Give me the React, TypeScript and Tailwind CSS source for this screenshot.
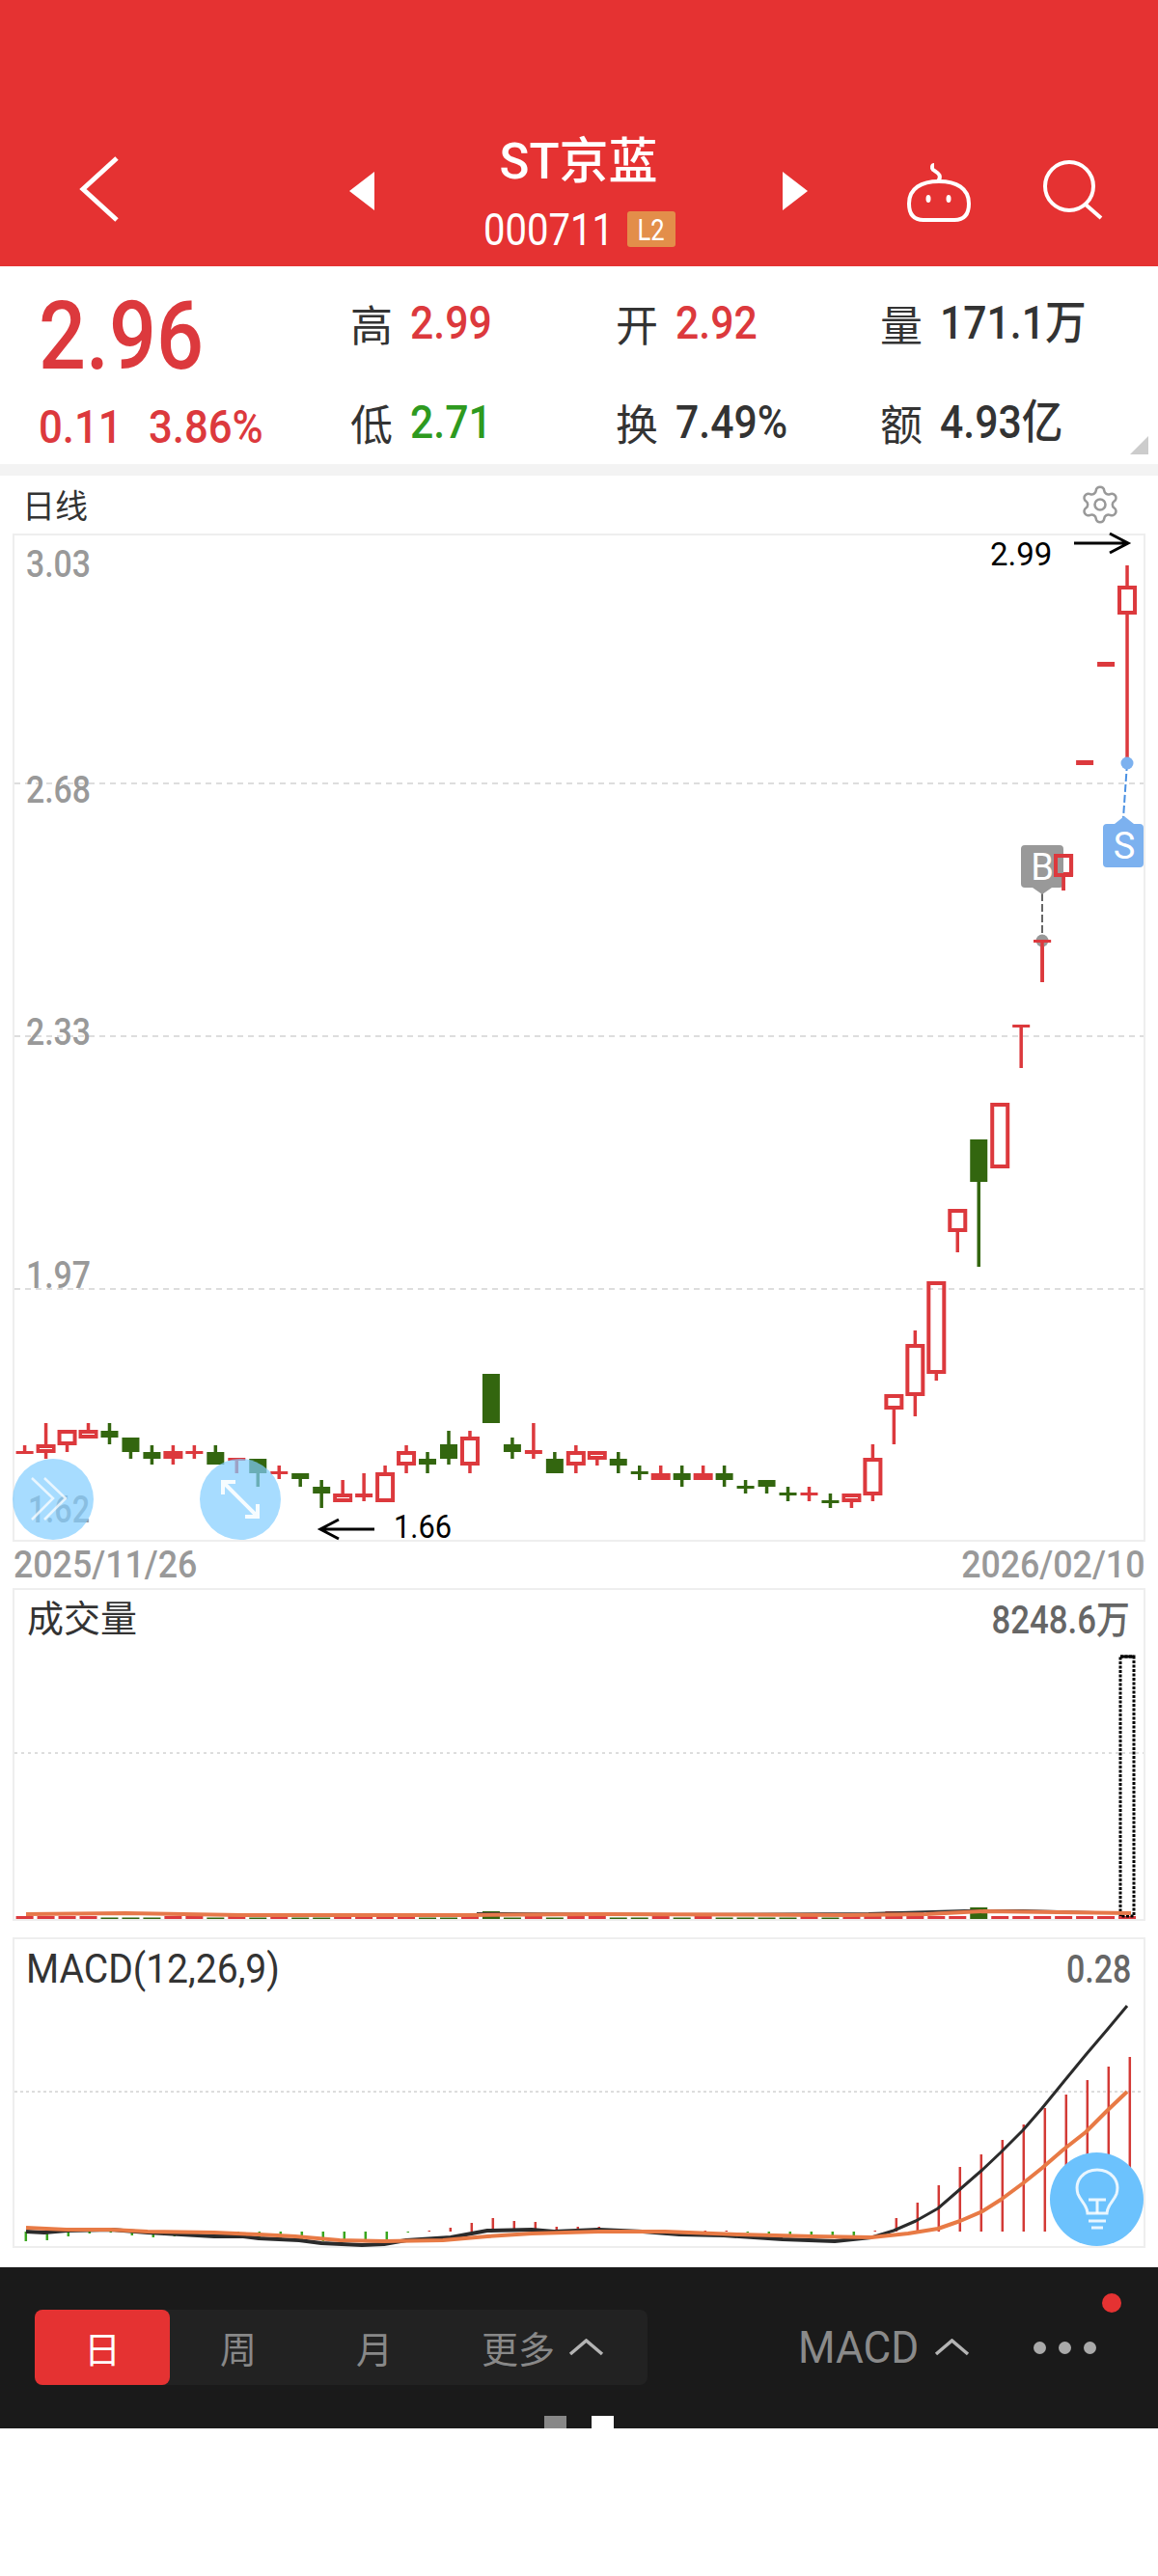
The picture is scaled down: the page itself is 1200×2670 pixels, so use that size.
import { Settings } from "lucide-react";

const numFont = "font-['Roboto','Noto_Sans_CJK_SC',sans-serif]";

// high, body top, body bottom, low, colour — page pixel coordinates
const candles: [number, number, number, number, "r" | "g"][] = [
  [1498, 1504, 1507, 1507, "r"],
  [1475, 1497, 1506, 1512, "r"],
  [1482, 1482, 1498, 1505, "r"],
  [1475, 1482, 1491, 1491, "r"],
  [1475, 1483, 1490, 1497, "g"],
  [1490, 1490, 1505, 1512, "g"],
  [1498, 1505, 1512, 1518, "g"],
  [1498, 1504, 1512, 1518, "r"],
  [1498, 1504, 1507, 1512, "r"],
  [1498, 1505, 1518, 1518, "g"],
  [1511, 1511, 1514, 1527, "r"],
  [1512, 1512, 1527, 1541, "g"],
  [1519, 1525, 1528, 1533, "r"],
  [1527, 1527, 1533, 1541, "g"],
  [1534, 1541, 1548, 1563, "g"],
  [1534, 1548, 1557, 1557, "r"],
  [1527, 1548, 1552, 1556, "r"],
  [1519, 1526, 1557, 1557, "r"],
  [1498, 1504, 1519, 1527, "r"],
  [1505, 1512, 1518, 1527, "g"],
  [1483, 1497, 1512, 1518, "g"],
  [1483, 1489, 1519, 1527, "r"],
  [1424, 1424, 1475, 1475, "g"],
  [1490, 1497, 1505, 1512, "g"],
  [1475, 1503, 1507, 1512, "r"],
  [1505, 1512, 1527, 1527, "g"],
  [1498, 1504, 1519, 1527, "r"],
  [1504, 1504, 1513, 1519, "r"],
  [1505, 1512, 1519, 1527, "g"],
  [1519, 1525, 1528, 1534, "g"],
  [1519, 1527, 1534, 1534, "r"],
  [1519, 1527, 1534, 1541, "g"],
  [1519, 1527, 1534, 1534, "r"],
  [1519, 1527, 1534, 1541, "g"],
  [1534, 1540, 1543, 1548, "g"],
  [1534, 1534, 1541, 1548, "g"],
  [1541, 1547, 1550, 1556, "g"],
  [1541, 1547, 1550, 1556, "r"],
  [1548, 1555, 1558, 1563, "g"],
  [1548, 1548, 1557, 1563, "r"],
  [1497, 1511, 1550, 1556, "r"],
  [1445, 1445, 1461, 1497, "r"],
  [1379, 1393, 1447, 1468, "r"],
  [1328, 1328, 1424, 1431, "r"],
  [1253, 1253, 1277, 1298, "r"],
  [1181, 1181, 1225, 1313, "g"],
  [1143, 1143, 1211, 1211, "r"],
  [1062, 1062, 1065, 1107, "r"],
  [974, 974, 977, 1018, "r"],
  [885, 885, 908, 923, "r"],
  [788, 788, 793, 793, "r"],
  [686, 686, 691, 691, "r"],
  [586, 607, 637, 791, "r"],
];

const RED = "#dc393d";
const GREEN = "#33660f";
const cx = (i: number) => 25.6 + 21.97 * i;

// MACD histogram tips, one per candle. baseline is y=2313
const macdBars = [
  2323, 2322, 2318, 2315, 2314, 2317, 2319, 2318, 2318, 2318, 2319, 2320, 2322, 2322, 2323, 2324, 2324, 2322, 2314,
  2312, 2309, 2304, 2299, 2302, 2303, 2308, 2308, 2308, 2312, 2312, 2312, 2312, 2312, 2312, 2314, 2315, 2317, 2317,
  2318, 2318, 2312, 2299, 2283, 2265, 2246, 2233, 2218, 2202, 2185, 2171, 2156, 2142, 2132,
];

const macdBlackLeft =
  "27,2313 46,2314 69,2312 115,2311 153,2314 222,2318 252,2318 268,2320 310,2322 333,2325 375,2327 398,2326 421,2322 467,2319 505,2312 551,2311 574,2313 620,2311 666,2313 704,2316 750,2317 811,2321 865,2323 903,2319";
const macdBlackRight =
  "903,2319 926,2312 949,2302 972,2289 995,2269 1018,2249 1037,2231 1060,2208 1080,2185 1102,2158 1125,2130 1148,2103 1168,2079";
const macdOrange =
  "27,2309 69,2311 115,2311 153,2313 222,2314 268,2316 306,2318 352,2322 398,2323 459,2322 505,2318 551,2315 620,2313 689,2313 765,2316 842,2318 903,2319 941,2315 972,2310 995,2302 1018,2292 1037,2280 1060,2263 1080,2247 1102,2228 1125,2210 1148,2187 1168,2168";

function Stat({ label, value, color }: { label: string; value: string; color: string }) {
  return (
    <div className="flex items-center h-[60px]">
      <span className="text-[44px] leading-none text-[#333333] w-[62px]">{label}</span>
      <span className={`${numFont} inline-block origin-left scale-x-[0.89] whitespace-nowrap text-[48px] leading-none font-medium ${color}`}>
        {value}
      </span>
    </div>
  );
}

function Caret() {
  return (
    <svg width="37" height="18" viewBox="0 0 37 18" fill="none" stroke="#b4b4b4" strokeWidth="3.5">
      <polyline points="2,16 18.5,2 35,16" />
    </svg>
  );
}

function Candles() {
  return (
    <>
      {candles.map(([hi, top, bot, lo, c], i) => {
        const x = cx(i);
        const col = c === "r" ? RED : GREEN;
        const thin = bot - top < 6;
        return (
          <g key={i} stroke={col} fill="none">
            {hi < top && <line x1={x} x2={x} y1={hi} y2={top} strokeWidth={3.5} />}
            {lo > bot && <line x1={x} x2={x} y1={bot} y2={lo} strokeWidth={3.5} />}
            {c === "g" || thin ? (
              <rect x={x - 9} y={top} width={18} height={bot - top} fill={col} stroke="none" />
            ) : (
              <rect x={x - 8} y={top + 2} width={16} height={bot - top - 4} strokeWidth={4} />
            )}
          </g>
        );
      })}
    </>
  );
}

export default function App() {
  return (
    <div className="w-[1200px] h-[2670px] bg-white font-['Noto_Sans_CJK_SC',sans-serif] overflow-hidden">
      {/* header */}
      <div className="h-[276px] bg-[#e53232] flex items-start pt-[145px] pl-[82px] text-white">
        <svg width="42" height="68" viewBox="0 0 42 68" className="mt-[17px]" fill="none" stroke="white" strokeWidth="5">
          <polyline points="39,2 4,34 39,66" />
        </svg>
        <svg width="26" height="40" viewBox="0 0 26 40" className="ml-[238px] mt-[33px]">
          <polygon points="26,0 0,20 26,40" fill="white" />
        </svg>
        <div className="w-[423px] flex flex-col">
          <div className="text-[51px] leading-[46px] font-medium text-center font-['Roboto','Noto_Sans_CJK_SC',sans-serif]">ST京蓝</div>
          <div className="flex items-center mt-[28px] h-[37px] pl-[113px]">
            <span className={`${numFont} w-[149px] inline-block origin-left scale-x-[0.87] text-[46px] leading-none`}>000711</span>
            <span className={`${numFont} w-[50px] h-[37px] rounded-[3px] bg-[#e38e4a] flex items-center justify-center text-[32px] leading-none`}>
              <span className="inline-block scale-x-[0.8]">L2</span>
            </span>
          </div>
        </div>
        <svg width="26" height="40" viewBox="0 0 26 40" className="mt-[33px]">
          <polygon points="0,0 26,20 0,40" fill="white" />
        </svg>
        <svg width="68" height="62" viewBox="0 0 68 62" className="ml-[102px] mt-[24px]" fill="none" stroke="white" strokeWidth="4">
          <path d="M3 42 C3 26 16 19 34 19 C52 19 65 26 65 42 C65 53 60 59 50 59 L18 59 C8 59 3 53 3 42 Z" />
          <path d="M33 19 C38 12 32 10 28 7 C26 5 27 2 29 2" />
          <ellipse cx="23" cy="37" rx="2.5" ry="4" fill="white" stroke="none" />
          <ellipse cx="44" cy="37" rx="2.5" ry="4" fill="white" stroke="none" />
        </svg>
        <svg width="62" height="62" viewBox="0 0 62 62" className="ml-[74px] mt-[21px]" fill="none" stroke="white" strokeWidth="4">
          <circle cx="27" cy="27" r="25" />
          <line x1="44" y1="46" x2="60" y2="60" />
        </svg>
      </div>

      {/* quote stats */}
      <div className="h-[205px] flex relative">
        <div className={`${numFont} w-[363px] pl-[40px] pt-[31px] flex flex-col font-medium text-[#dc393d]`}>
          <div className="origin-left scale-x-[0.88] text-[98px] leading-[84px]">2.96</div>
          <div className="flex text-[48px] leading-none mt-[28px] gap-[19px]">
            <span className="inline-block origin-left scale-x-[0.91]">0.11</span>
            <span className="inline-block origin-left scale-x-[0.91]">3.86%</span>
          </div>
        </div>
        <div className="grid grid-cols-[275px_274px_1fr] grid-rows-[60px_60px] gap-y-[43px] pt-[29px] flex-1">
          <Stat label="高" value="2.99" color="text-[#dc393d]" />
          <Stat label="开" value="2.92" color="text-[#dc393d]" />
          <Stat label="量" value="171.1万" color="text-[#333333]" />
          <Stat label="低" value="2.71" color="text-[#2e9a1f]" />
          <Stat label="换" value="7.49%" color="text-[#333333]" />
          <Stat label="额" value="4.93亿" color="text-[#333333]" />
        </div>
        <div className="absolute right-[10px] bottom-[10px] w-0 h-0 border-l-[19px] border-l-transparent border-b-[19px] border-b-[#cccccc]" />
      </div>
      <div className="h-[12px] bg-[#f3f3f3]" />

      {/* kline title */}
      <div className="h-[60px] flex items-center justify-between pl-[23px] pr-[38px]">
        <span className="text-[34px] leading-none text-[#333333]">日线</span>
        <Settings size={44} strokeWidth={1.4} className="text-[#999999]" />
      </div>

      {/* kline chart */}
      <div className="relative box-border w-[1174px] h-[1045px] ml-[13px] border-2 border-[#eeeeee]">
        <svg width="1170" height="1041" viewBox="15 555 1170 1041" className="block overflow-visible">
          {[812, 1074, 1336].map((y) => (
            <line key={y} x1="15" x2="1185" y1={y} y2={y} stroke="#dddddd" strokeWidth="2" strokeDasharray="6 5" />
          ))}
          <g className={numFont} fontSize="39" fill="#999999" fontWeight="500">
            <text x="27" y="598" textLength="67" lengthAdjust="spacingAndGlyphs">3.03</text>
            <text x="27" y="832" textLength="67" lengthAdjust="spacingAndGlyphs">2.68</text>
            <text x="27" y="1083" textLength="67" lengthAdjust="spacingAndGlyphs">2.33</text>
            <text x="27" y="1335" textLength="67" lengthAdjust="spacingAndGlyphs">1.97</text>
            <text x="29" y="1578" textLength="64" lengthAdjust="spacingAndGlyphs">1.62</text>
          </g>
          <Candles />
          <g fill="none" stroke="black" strokeWidth="3">
            <path d="M1113 563 H1168 M1150 553 L1169 563 L1150 573" />
            <path d="M388 1585 H333 M351 1575 L332 1585 L351 1595" />
          </g>
          <g className="font-['Roboto',sans-serif]" fontSize="33" fill="black">
            <text x="1026" y="586">2.99</text>
            <text x="408" y="1594" textLength="60" lengthAdjust="spacingAndGlyphs">1.66</text>
          </g>
          {/* buy / sell marks */}
          <line x1="1168" y1="791" x2="1164" y2="848" stroke="#4a90e2" strokeWidth="2" strokeDasharray="8 3" />
          <circle cx="1168" cy="791" r="6.5" fill="#7cb1ef" />
          <path
            d="M1147 854 H1155 L1165 846 L1175 854 H1181 Q1185 854 1185 858 V895 Q1185 899 1181 899 H1147 Q1143 899 1143 895 V858 Q1143 854 1147 854 Z"
            fill="#7cb1ef"
          />
          <text x="1165" y="890" textAnchor="middle" fontSize="38" fill="white" className="font-['Roboto',sans-serif]">S</text>
          <line x1="1080" y1="926" x2="1080" y2="975" stroke="#666666" strokeWidth="2" strokeDasharray="8 3" />
          <circle cx="1080" cy="975" r="6.5" fill="#999999" />
          <path
            d="M1062 876 H1098 Q1102 876 1102 880 V916 Q1102 920 1098 920 H1090 L1080 927 L1070 920 H1062 Q1058 920 1058 916 V880 Q1058 876 1062 876 Z"
            fill="#999999"
          />
          <text x="1080" y="912" textAnchor="middle" fontSize="38" fill="white" className="font-['Roboto',sans-serif]">B</text>
          <rect x="1094" y="887" width="16" height="20" fill="none" stroke={RED} strokeWidth="4" />
          <line x1="1102" x2="1102" y1="908" y2="923" stroke={RED} strokeWidth="3.5" />
          <rect x="1071" y="974" width="18" height="3" fill={RED} />
          <line x1="1080" x2="1080" y1="976" y2="1018" stroke={RED} strokeWidth="3.5" />
        </svg>
        <div className="absolute -left-[2px] bottom-0 w-[84px] h-[84px] rounded-full bg-[#82cdff]/70 flex items-center justify-center">
          <svg width="50" height="50" viewBox="0 0 50 50" fill="none" stroke="white" strokeOpacity="0.75" strokeWidth="2.5">
            <polyline points="3,3 25,24 3,46" />
            <polyline points="16,3 38,24 16,46" />
          </svg>
        </div>
        <div className="absolute left-[192px] bottom-0 w-[84px] h-[84px] rounded-full bg-[#82cdff]/70 flex items-center justify-center">
          <svg width="48" height="48" viewBox="0 0 48 48" fill="none" stroke="white" strokeOpacity="0.9" strokeWidth="4">
            <path d="M6 6 L42 42 M6 19 V6 H19 M42 29 V42 H29" />
          </svg>
        </div>
      </div>

      {/* dates */}
      <div className={`${numFont} h-[48px] flex items-center justify-between px-[14px] text-[38px] leading-none font-medium text-[#999999]`}>
        <span className="inline-block origin-left scale-x-[0.94]">2025/11/26</span>
        <span className="inline-block origin-right scale-x-[0.94]">2026/02/10</span>
      </div>

      {/* volume */}
      <div className="relative box-border w-[1174px] h-[345px] ml-[13px] border-2 border-[#eeeeee]">
        <svg width="1170" height="341" viewBox="15 1648 1170 341" className="block overflow-visible">
          <line x1="15" x2="1185" y1="1817" y2="1817" stroke="#dddddd" strokeWidth="2" strokeDasharray="3 4" />
          {candles.map(([, , , , c], i) => (
            <rect
              key={i}
              x={cx(i) - 9}
              y={i === 22 ? 1981 : i === 45 ? 1977 : i === 41 || i === 42 ? 1981 : c === "r" ? 1986 : 1987.5}
              width={18}
              height={i === 22 ? 8 : i === 45 ? 12 : i === 41 || i === 42 ? 8 : c === "r" ? 3 : 1.5}
              fill={c === "r" ? RED : GREEN}
            />
          ))}
          <rect x="1161" y="1717" width="14" height="269" fill="none" stroke="black" strokeWidth="3" strokeDasharray="3 1.5" />
          <line x1="1161" x2="1175" y1="1717" y2="1717" stroke="black" strokeWidth="3" />
          <polyline points="494,1983 520,1983 700,1984 900,1983 1000,1980 1060,1980 1172,1983" fill="none" stroke="#333333" strokeWidth="2" />
          <polyline points="27,1984 130,1983 250,1985 480,1985 620,1984 880,1985 960,1984 1020,1981 1172,1983" fill="none" stroke="#e6784a" strokeWidth="4" />
        </svg>
        <span className="absolute left-[13px] top-[3px] text-[38px] leading-[48px] text-[#333333]">成交量</span>
        <span className={`${numFont} absolute right-[14px] top-[9px] origin-right scale-x-[0.87] text-[40px] leading-[46px] font-medium text-[#666666]`}>
          8248.6万
        </span>
      </div>

      <div className="h-[17px]" />

      {/* macd */}
      <div className="relative box-border w-[1174px] h-[322px] ml-[13px] border-2 border-[#eeeeee]">
        <svg width="1170" height="318" viewBox="15 2010 1170 318" className="block overflow-visible">
          <line x1="15" x2="1185" y1="2168" y2="2168" stroke="#dddddd" strokeWidth="2" strokeDasharray="3 3" />
          {macdBars.map((tip, i) => (
            <line
              key={i}
              x1={26.8 + 22 * i}
              x2={26.8 + 22 * i}
              y1="2313"
              y2={tip}
              stroke={tip > 2313 ? "#3aa61f" : "#d33a36"}
              strokeWidth="2.5"
            />
          ))}
          <polyline points={macdBlackLeft} fill="none" stroke="#2b2b2b" strokeWidth="4" strokeLinejoin="round" />
          <polyline points={macdBlackRight} fill="none" stroke="#2b2b2b" strokeWidth="3" strokeLinejoin="round" />
          <polyline points={macdOrange} fill="none" stroke="#e87a45" strokeWidth="4" strokeLinejoin="round" />
        </svg>
        <span className={`${numFont} absolute left-[12px] top-[8px] origin-left scale-x-[0.93] text-[42px] leading-[46px] text-[#333333]`}>
          MACD(12,26,9)
        </span>
        <span className={`${numFont} absolute right-[13px] top-[9px] origin-right scale-x-[0.85] text-[40px] leading-[46px] font-medium text-[#666666]`}>
          0.28
        </span>
        <div className="absolute right-0 bottom-0 w-[97px] h-[97px] rounded-full bg-[#6cc2fd] flex items-center justify-center">
          <svg width="96" height="96" viewBox="0 0 96 96" fill="none" stroke="white" strokeOpacity="0.85" strokeWidth="3">
            <path d="M38 62 C38 54 31 50 28 42 C24 28 34 17 48 17 C62 17 72 28 68 42 C65 50 58 54 58 62 Z" />
            <path d="M39 48 H57 M48 48 V62 M39 70 H57 M42 77 H54" />
          </svg>
        </div>
      </div>

      <div className="h-[20px]" />

      {/* bottom toolbar */}
      <div className="relative h-[167px] bg-[#1a1a1a] pt-[44px]">
        <div className="flex items-center pl-[36px] h-[78px]">
          <div className="w-[635px] h-[78px] bg-[#222222] rounded-[8px] flex items-center text-[38px] leading-none text-[#888888]">
            <div className="w-[140px] h-[78px] rounded-[8px] bg-[#e53232] text-white flex items-center justify-center">日</div>
            <div className="w-[142px] text-center">周</div>
            <div className="w-[140px] text-center">月</div>
            <div className="flex items-center ml-[41px] gap-[14px]">
              <span>更多</span>
              <Caret />
            </div>
          </div>
          <span className={`${numFont} w-[141px] ml-[156px] inline-block origin-left scale-x-[0.96] text-[46px] leading-none text-[#8a8a8a]`}>MACD</span>
          <Caret />
          <div className="flex gap-[13px] ml-[66px]">
            <span className="w-[13px] h-[13px] rounded-full bg-[#aaaaaa]" />
            <span className="w-[13px] h-[13px] rounded-full bg-[#aaaaaa]" />
            <span className="w-[13px] h-[13px] rounded-full bg-[#aaaaaa]" />
          </div>
        </div>
        <div className="flex justify-center gap-[26px] mt-[32px]">
          <span className="w-[23px] h-[13px] bg-[#888888]" />
          <span className="w-[23px] h-[13px] bg-white" />
        </div>
        <span className="absolute left-[1142px] top-[27px] w-[20px] h-[20px] rounded-full bg-[#e53232]" />
      </div>
    </div>
  );
}
